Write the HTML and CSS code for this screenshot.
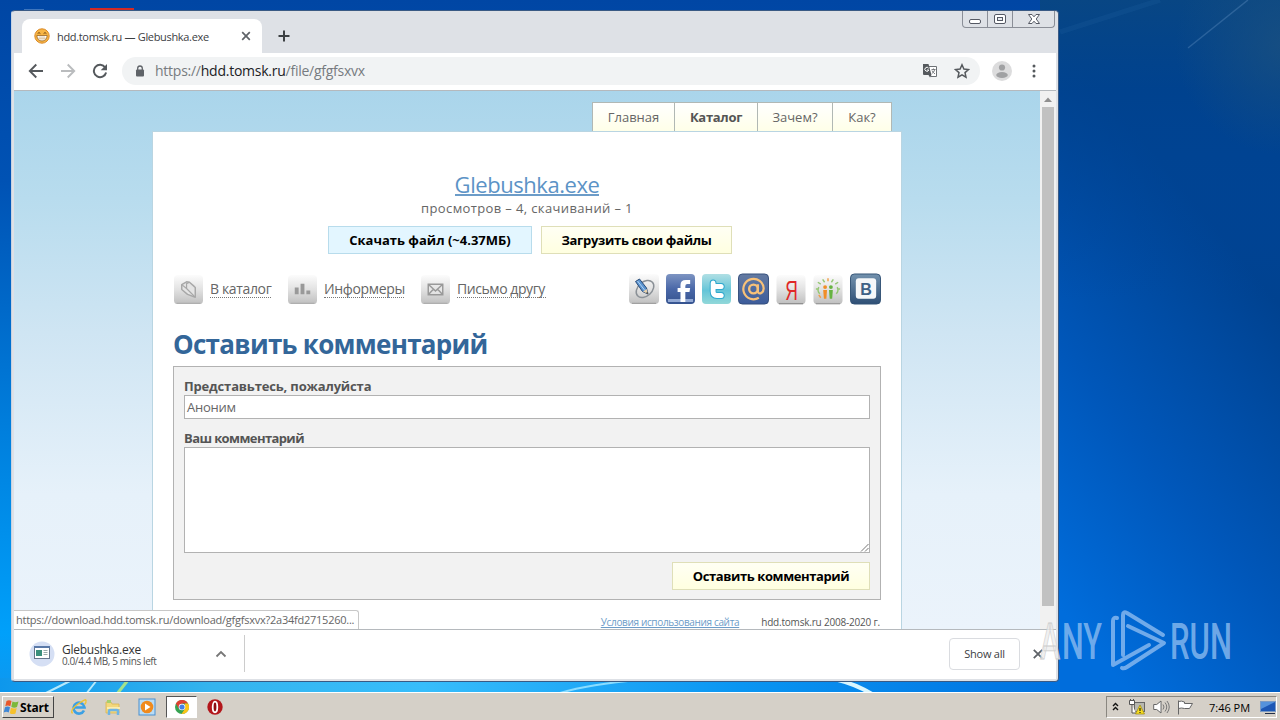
FILE: index.html
```html
<!DOCTYPE html>
<html lang="ru">
<head>
    <meta charset="UTF-8">
    <title>hdd.tomsk.ru — Glebushka.exe</title>
    <link rel="stylesheet" href="styles.css">
</head>
<body>
<div class="desktop">
    <svg class="wallpaper" width="1280" height="720" viewBox="0 0 1280 720">
        <defs>
            <linearGradient id="sky" x1="0" y1="0" x2="0" y2="1">
                <stop offset="0" stop-color="#0046a4"/>
                <stop offset=".25" stop-color="#0052b4"/>
                <stop offset=".6" stop-color="#007fdd"/>
                <stop offset=".88" stop-color="#00a0fa"/>
                <stop offset="1" stop-color="#1593ea"/>
            </linearGradient>
            <linearGradient id="right" gradientUnits="userSpaceOnUse" x1="1020" y1="560" x2="1300" y2="330">
                <stop offset="0" stop-color="#006ddc"/>
                <stop offset=".45" stop-color="#0057ba"/>
                <stop offset="1" stop-color="#004290"/>
            </linearGradient>
            <linearGradient id="topright" x1="0" y1="0" x2="0" y2="1">
                <stop offset="0" stop-color="#084684"/>
                <stop offset=".3" stop-color="#00428e" stop-opacity=".8"/>
                <stop offset="1" stop-color="#0048a0" stop-opacity="0"/>
            </linearGradient>
            <linearGradient id="bottom" x1="0" y1="0" x2="1" y2="0">
                <stop offset="0" stop-color="#0d97ec"/>
                <stop offset=".2" stop-color="#35b4ee"/>
                <stop offset=".4" stop-color="#37bdfb"/>
                <stop offset=".7" stop-color="#0a95f2"/>
                <stop offset="1" stop-color="#0071e0"/>
            </linearGradient>
            <radialGradient id="haze" gradientUnits="userSpaceOnUse" cx="1285" cy="45" r="110">
                <stop offset="0" stop-color="#1a5080" stop-opacity=".8"/>
                <stop offset="1" stop-color="#1a5080" stop-opacity="0"/>
            </radialGradient>
        </defs>
        <rect width="1280" height="720" fill="url(#sky)"/>
        <rect x="1040" width="240" height="720" fill="url(#right)"/>
        <rect x="1040" width="240" height="300" fill="url(#topright)"/>
        <rect x="1130" width="150" height="170" fill="url(#haze)"/>
        <rect y="678" width="1060" height="16" fill="url(#bottom)"/>
        <path d="M1188 48L1248 0" stroke="#5c8dbd" stroke-opacity=".4" stroke-width="1.5"/>
        <path d="M1060 32L1160 0" stroke="#2c70b0" stroke-opacity=".15" stroke-width="5"/>
        <path d="M44 694L72 680M86 694L97 680" stroke="#b5e8fb" stroke-width="2"/>
        <path d="M117 694L128 680" stroke="#a4e28c" stroke-width="3"/>
        <path d="M560 693Q590 684 640 680" stroke="#8adcff" stroke-width="2" fill="none"/>
        <path d="M838 680Q855 684 872 694" stroke="#d8f6ff" stroke-width="4" fill="none"/>
        <path d="M24 10h20" stroke="#7fa6d4" stroke-width="1"/>
        <rect x="90" y="8" width="44" height="4" fill="#d42a25"/>
    </svg>

    <div class="window">
        <div class="tabstrip">
            <div class="tab">
                <svg class="favicon" width="16" height="16" viewBox="0 0 16 16">
                    <circle cx="8" cy="8" r="7.2" fill="#f8b544" stroke="#d98a28"/>
                    <path d="M2.800 7.500h10.400q-.6 5.500-5.200 5.500t-5.200-5.500z" fill="#fff" stroke="#9a6420" stroke-width=".8"/>
                    <path d="M3.500 10.200h9M6 8v4.400M8 8v5M10 8v4.400" stroke="#c09a62" stroke-width=".5"/>
                    <path d="M3.600 5.600q1.400-2 2.800 0M9.600 5.600q1.400-2 2.800 0" stroke="#714716" stroke-width="1" fill="none"/>
                </svg>
                <span class="tab-title">hdd.tomsk.ru — Glebushka.exe</span>
                <svg class="tab-close" width="10" height="10" viewBox="0 0 10 10"><path d="M1.2 1.2l7.600 7.600M8.800 1.200L1.200 8.800" stroke="#5f6368" stroke-width="1.700"/></svg>
            </div>
            <svg class="new-tab" width="12" height="12" viewBox="0 0 12 12"><path d="M6 .5v11M.5 6h11" stroke="#3c4043" stroke-width="2"/></svg>
            <div class="caption-buttons">
                <div class="cap"><svg width="14" height="14" viewBox="0 0 14 14"><rect x="1.500" y="8.500" width="11" height="4" rx="1.500" fill="#fff" stroke="#555964"/></svg></div>
                <div class="cap"><svg width="14" height="14" viewBox="0 0 14 14"><rect x="1.500" y="3.500" width="11" height="9" rx="1.500" fill="#fff" stroke="#555964"/><rect x="4.500" y="6.500" width="5" height="3" fill="#e9ebef" stroke="#555964"/></svg></div>
                <div class="cap cap-close"><svg width="14" height="14" viewBox="0 0 14 14"><path d="M1.500 3.500h3.500L7 5.800l2-2.300h3.500L9.200 8l3.300 4.500H9L7 10.200l-2 2.300H1.500L4.800 8z" fill="#fff" stroke="#555964"/></svg></div>
            </div>
        </div>

        <div class="toolbar">
            <svg width="16" height="16" viewBox="0 0 16 16"><path d="M15 8H2M8.300 1.500L1.800 8l6.500 6.500" fill="none" stroke="#55595d" stroke-width="1.900"/></svg>
            <svg width="16" height="16" viewBox="0 0 16 16"><path d="M1 8h13M7.700 1.500L14.200 8l-6.500 6.500" fill="none" stroke="#babcbe" stroke-width="1.900"/></svg>
            <svg width="16" height="16" viewBox="0 0 16 16"><path d="M13.200 4.500A6.200 6.200 0 1 0 14.100 9.500" fill="none" stroke="#55595d" stroke-width="2"/><path d="M15 1v6.300H8.700z" fill="#55595d"/></svg>
            <div class="omnibox">
                <svg class="lock" width="10" height="12" viewBox="0 0 10 12"><rect x="1" y="4.500" width="8" height="7" rx="1" fill="#5f6368"/><path d="M2.700 5V3.300a2.300 2.300 0 0 1 4.600 0V5" fill="none" stroke="#5f6368" stroke-width="1.300"/></svg>
                <span class="url">https://<b>hdd.tomsk.ru</b>/file/gfgfsxvx</span>
                <svg class="translate" width="16" height="16" viewBox="0 0 16 16">
                    <path d="M7 3.500h7.500v10H8.500" fill="#fff" stroke="#6d7175"/>
                    <path d="M1 1h5.500l3 11H2a1 1 0 0 1-1-1zM6.500 12h3l-1.500 2.500z" fill="#55595d"/>
                    <path d="M6.600 5.200A2 2 0 1 0 6.800 7H5" fill="none" stroke="#fff"/>
                    <path d="M9.500 6.500h4M11.500 5.500v1M12.800 6.500q-.8 3-3 4M10 7.500q1 2 3 3.500" fill="none" stroke="#6d7175" stroke-width=".9"/>
                </svg>
                <svg width="16" height="16" viewBox="0 0 16 16"><path d="M8 1.800l1.900 4.300 4.600.4-3.500 3.100 1 4.600L8 11.800l-4 2.400 1-4.600L1.500 6.500l4.600-.4z" fill="none" stroke="#55595d" stroke-width="1.500"/></svg>
            </div>
            <svg class="avatar" width="20" height="20" viewBox="0 0 20 20"><circle cx="10" cy="10" r="10" fill="#dcdcdd"/><circle cx="10" cy="6.500" r="3.100" fill="#a0a1a3"/><ellipse cx="10" cy="14" rx="5.800" ry="3" fill="#a0a1a3"/></svg>
            <svg class="kebab" width="4" height="14" viewBox="0 0 4 14"><circle cx="2" cy="2" r="1.500" fill="#55595d"/><circle cx="2" cy="7" r="1.500" fill="#55595d"/><circle cx="2" cy="12" r="1.500" fill="#55595d"/></svg>
        </div>

        <div class="viewport">
            <div class="page">
                <div class="nav">
                    <a class="nav-item nav-main"><span>Главная</span></a>
                    <a class="nav-item nav-catalog"><span>Каталог</span></a>
                    <a class="nav-item nav-why"><span>Зачем?</span></a>
                    <a class="nav-item nav-how"><span>Как?</span></a>
                </div>
                <div class="content">
                    <div class="file-title"><a>Glebushka.exe</a></div>
                    <div class="file-meta"><span>просмотров – 4, скачиваний – 1</span></div>
                    <div class="file-actions">
                        <div class="btn btn-blue"><span>Скачать файл (~4.37МБ)</span></div>
                        <div class="btn btn-upload"><span>Загрузить свои файлы</span></div>
                    </div>

                    <div class="links">
                        <svg width="29" height="29" viewBox="0 0 30 30">
                            <defs><linearGradient id="grey" x1="0" y1="0" x2="0" y2="1"><stop offset="0" stop-color="#fcfcfc"/><stop offset=".5" stop-color="#e2e2e2"/><stop offset="1" stop-color="#bfbfbf"/></linearGradient></defs>
                            <rect width="30" height="30" rx="4" fill="url(#grey)"/><path d="M3 29.300h24" stroke="#aaa"/>
                            <path d="M8 10l5-3 3 .5 4 3.500 2 2v10l-8-3-6-5z" fill="#e4e4e4" stroke="#a8a8a8" stroke-width="1.500" stroke-linejoin="round"/><path d="M8 10l5 4 8 8M13 14V9l3-1.500" fill="none" stroke="#a8a8a8" stroke-width="1.200"/>
                        </svg>
                        <a class="link-catalog">В каталог</a>
                        <svg width="29" height="29" viewBox="0 0 30 30">
                            <rect width="30" height="30" rx="4" fill="url(#grey)"/><path d="M3 29.300h24" stroke="#aaa"/>
                            <path d="M7 13h4v7H7zM13 9h4v11h-4zM19 16h4v4h-4z" fill="#999"/>
                        </svg>
                        <a class="link-informers">Информеры</a>
                        <svg width="29" height="29" viewBox="0 0 30 30">
                            <rect width="30" height="30" rx="4" fill="url(#grey)"/><path d="M3 29.300h24" stroke="#aaa"/>
                            <path d="M7.500 9.500h15v11h-15zM7.500 9.500l7.500 7 7.500-7M7.500 20.500l5.500-6M22.500 20.500l-5.500-6" fill="#ededed" fill-opacity=".5" stroke="#999" stroke-width="1.500"/>
                        </svg>
                        <a class="link-mail">Письмо другу</a>

                        <div class="social">
                            <svg width="30" height="30" viewBox="0 0 30 30">
                                <rect width="30" height="30" rx="4" fill="url(#grey)"/><path d="M3 29.300h24" stroke="#999"/>
                                <ellipse cx="16" cy="15" rx="10" ry="7" transform="rotate(-42 16 15)" fill="none" stroke="#8b9197" stroke-width="1.500"/>
                                <path d="M6.500 7.500l4-2.500 7 9 1.500 6-5.500-2.500z" fill="#5a93d0" stroke="#2b4c78"/><path d="M8.500 7l7 9" stroke="#b4d6f5"/><path d="M14 17.500l5 2.500-1.300-5z" fill="#e8d2ae"/><path d="M17 19l2 1-.5-2z" fill="#222"/>
                            </svg>
                            <svg width="29" height="30" viewBox="0 0 30 30" preserveAspectRatio="none">
                                <defs><linearGradient id="fb" x1="0" y1="0" x2="0" y2="1"><stop offset="0" stop-color="#7d94c2"/><stop offset=".5" stop-color="#4a68a8"/><stop offset="1" stop-color="#35538f"/></linearGradient></defs>
                                <rect width="30" height="30" rx="4" fill="url(#fb)"/><rect x="2" y="25" width="26" height="3" fill="#91a8d4"/>
                                <path d="M15 28V18h-3v-4h3v-3q0-5 5.500-5H25v4h-3q-2 0-2 2v2h5l-.7 4H20v10z" fill="#fff"/>
                            </svg>
                            <svg width="29" height="30" viewBox="0 0 30 30" preserveAspectRatio="none">
                                <defs><linearGradient id="tw" x1="0" y1="0" x2="0" y2="1"><stop offset="0" stop-color="#b0dfe4"/><stop offset=".55" stop-color="#65c5d8"/><stop offset="1" stop-color="#91d8d9"/></linearGradient></defs>
                                <rect width="30" height="30" rx="4" fill="url(#tw)"/>
                                <path d="M11.500 9v8.500q0 4 4 4h4.500M11.500 12.500h8.500" fill="none" stroke="#2fa8ce" stroke-width="7" stroke-linecap="round"/>
                                <path d="M11.500 9v8.500q0 4 4 4h4.500M11.500 12.500h8.500" fill="none" stroke="#fff" stroke-width="5" stroke-linecap="round"/>
                            </svg>
                            <svg width="31" height="32" viewBox="0 0 32 32">
                                <defs><linearGradient id="mail" x1="0" y1="0" x2="0" y2="1"><stop offset="0" stop-color="#647aa1"/><stop offset="1" stop-color="#3c5c9b"/></linearGradient></defs>
                                <rect x=".5" y=".5" width="31" height="31" rx="4" fill="url(#mail)" stroke="#354e7c"/>
                                <circle cx="16" cy="16" r="4.500" fill="none" stroke="#f8c178" stroke-width="2.500"/>
                                <path d="M20.500 11v7q0 3 3 2.500 3-1.500 3-5A10.500 10.500 0 1 0 21.500 25" fill="none" stroke="#f8c178" stroke-width="2.300"/>
                            </svg>
                            <svg width="30" height="31" viewBox="0 0 31 31">
                                <rect x=".5" y=".5" width="30" height="30" rx="4" fill="url(#grey)"/><path d="M3 30.300h25" stroke="#777"/>
                                <text class="ya" x="9.500" y="26" textLength="13" lengthAdjust="spacingAndGlyphs">Я</text>
                            </svg>
                            <svg width="30" height="31" viewBox="0 0 31 31">
                                <rect x=".5" y=".5" width="30" height="30" rx="4" fill="url(#grey)"/><path d="M3 30.300h25" stroke="#888"/>
                                <path d="M7 20q-3-3-1-7M8 10l-3-2M12 8l-2-3M19 8l2-3M23 10l3-2M24 20q3-3 1-7M3 15h3M25 15h3" fill="none" stroke="#96c774" stroke-width="1.500"/>
                                <path d="M15.500 7V4M8 24l-2-3" stroke="#f1a04a" stroke-width="1.500"/>
                                <circle cx="12.500" cy="13" r="2" fill="#f18e28"/><path d="M10.500 16h4l-.7 9h-2.500z" fill="#f18e28"/>
                                <circle cx="18.500" cy="13" r="2" fill="#67b341"/><path d="M16.500 16h4l-.7 9h-2.500z" fill="#67b341"/>
                            </svg>
                            <svg width="31" height="32" viewBox="0 0 32 32">
                                <defs><linearGradient id="vk" x1="0" y1="0" x2="0" y2="1"><stop offset="0" stop-color="#7392ae"/><stop offset="1" stop-color="#2e4f75"/></linearGradient></defs>
                                <rect x=".5" y=".5" width="31" height="31" rx="4" fill="url(#vk)" stroke="#345476"/>
                                <rect x="6" y="5" width="21" height="21" rx="3" fill="#f5f7f9"/>
                                <text class="vk" x="10.500" y="22" textLength="12" lengthAdjust="spacingAndGlyphs">В</text>
                            </svg>
                        </div>
                    </div>

                    <h1><span>Оставить комментарий</span></h1>
                    <div class="form">
                        <label class="label-name">Представьтесь, пожалуйста</label>
                        <div class="input"><span>Аноним</span></div>
                        <label class="label-comment">Ваш комментарий</label>
                        <div class="textarea">
                            <svg width="9" height="9" viewBox="0 0 9 9"><path d="M1 8.500L8.500 1M5 8.500L8.500 5" stroke="#777"/></svg>
                        </div>
                        <div class="btn btn-submit"><span>Оставить комментарий</span></div>
                    </div>
                    <div class="footer">
                        <a>Условия использования сайта</a>
                        <span>hdd.tomsk.ru 2008-2020 г.</span>
                    </div>
                </div>
            </div>
            <div class="scrollbar">
                <svg width="16" height="16" viewBox="0 0 16 16"><path d="M4 11l4-4.500 4 4.500z" fill="#8f8f8f"/></svg>
                <div class="thumb"></div>
            </div>
            <div class="status"><span>https://download.hdd.tomsk.ru/download/gfgfsxvx?2a34fd2715260...</span></div>
        </div>

        <div class="downloads">
            <div class="download-item">
                <svg width="26" height="26" viewBox="0 0 26 26">
                    <circle cx="13" cy="13" r="12.500" fill="#d5dff4"/>
                    <rect x="5.500" y="5.500" width="15" height="12" fill="#fff" stroke="#66758c"/>
                    <path d="M5 6h16" stroke="#5a79a8" stroke-width="2"/>
                    <rect x="7" y="9" width="6" height="6" fill="#3b8f7c"/><path d="M14.500 9.500h4M14.500 11.500h4M14.500 13.500h4" stroke="#9aabaa"/>
                </svg>
                <div class="download-text">
                    <div class="download-name"><span>Glebushka.exe</span></div>
                    <div class="download-progress"><span>0.0/4.4 MB, 5 mins left</span></div>
                </div>
                <svg class="chevron" width="12" height="8" viewBox="0 0 12 8"><path d="M1.500 6.500L6 2l4.500 4.500" fill="none" stroke="#777" stroke-width="1.800"/></svg>
            </div>
            <div class="show-all"><span>Show all</span></div>
            <svg class="bar-close" width="10" height="10" viewBox="0 0 10 10"><path d="M.8.8l8.400 8.400M9.200.8L.8 9.200" stroke="#5f6368" stroke-width="1.800"/></svg>
        </div>
    </div>

    <svg class="watermark" width="220" height="70" viewBox="0 0 220 70">
        <g class="mark-text">
            <text class="mark-a" x="6" y="54" textLength="20" lengthAdjust="spacingAndGlyphs">A</text>
            <text x="28" y="54" textLength="40" lengthAdjust="spacingAndGlyphs">NY</text>
            <text x="136" y="54" textLength="62" lengthAdjust="spacingAndGlyphs">RUN</text>
        </g>
        <path class="mark-logo" d="M83 13q-4-1-4 3v44l36-20M89 50V10q0-4 4-2l36 22M94 21l36 17-37 24q-3 2-5 1"/>
    </svg>

    <div class="taskbar">
        <div class="start">
            <svg width="17" height="16" viewBox="0 0 16 16">
                <path d="M3 2q2.500-1.500 5 0L6.800 7.200q-2.500-1.300-5 0z" fill="#e8572b"/>
                <path d="M9 2.500q2.500 1.500 6 0L13.500 8q-3 1.500-5.700-.3z" fill="#7cb83c"/>
                <path d="M1.500 8.200q2.500-1.300 5 0L5.200 13.500q-2.500-1.300-5 0z" fill="#3f87d6"/>
                <path d="M7.500 8.700q2.500 1.500 5.700.3L12 14.500q-3 1.300-5.700-.3z" fill="#f6c12c"/>
            </svg>
            <span>Start</span>
        </div>
        <div class="quick">
            <svg width="18" height="18" viewBox="0 0 18 18"><path d="M14 12.500A5.500 5.500 0 1 1 14.500 9.500H5" fill="none" stroke="#3ba0e4" stroke-width="2.600"/><path d="M2.500 15.500Q-.5 12 8 6t8-3.500q.5 2-1.500 4" fill="none" stroke="#f0c22e" stroke-width="1.300"/></svg>
        </div>
        <div class="quick">
            <svg width="18" height="18" viewBox="0 0 18 18"><path d="M2 4h5l1 2h7v9H2z" fill="#f3d77c" stroke="#d9b552" stroke-width=".8"/><path d="M3 2h4v3H3z" fill="#a7cf6e"/><path d="M3 9h13v2H3z" fill="#fbedb0"/><path d="M5 17v-4q0-1 1-1h7q1 0 1 1v4" fill="none" stroke="#6fb5e4" stroke-width="2.500"/></svg>
        </div>
        <div class="quick">
            <svg width="18" height="18" viewBox="0 0 18 18"><rect x="1" y="1" width="16" height="16" fill="#b9dcf5" stroke="#4a90d0"/><circle cx="9" cy="9" r="6.300" fill="#f08a1d"/><path d="M7 5.500l5.500 3.500L7 12.500z" fill="#fff"/></svg>
        </div>
        <div class="quick quick-active">
            <svg width="14" height="14" viewBox="0 0 14 14"><circle cx="7" cy="7" r="7" fill="#36a352"/><path d="M.9 3.500A7 7 0 0 1 13.100 3.500H7L4 8.700z" fill="#df4032"/><path d="M13.100 3.500A7 7 0 0 1 6.500 14L10 8.700V3.500z" fill="#fbc417"/><circle cx="7" cy="7" r="3.300" fill="#fff"/><circle cx="7" cy="7" r="2.600" fill="#447fe4"/></svg>
        </div>
        <div class="quick">
            <svg width="16" height="16" viewBox="0 0 16 16"><circle cx="8" cy="8" r="7.700" fill="#b3161b"/><ellipse cx="8" cy="8" rx="2.300" ry="5.300" fill="#8e0d12" stroke="#fff" stroke-width="1.800"/></svg>
        </div>
        <div class="tray">
            <svg class="tray-up" width="8" height="10" viewBox="0 0 8 10"><path d="M1 4L3.500 1.500 6 4M1 8L3.500 5.500 6 8" fill="none" stroke="#111" stroke-width="1.400"/></svg>
            <svg class="tray-net" width="16" height="16" viewBox="0 0 16 16"><rect x="5.500" y="3.500" width="10" height="9" fill="#b8b8b0" stroke="#666"/><path d="M.5 1.500h5v4h-5zM3 5.500v8.500h4M1.500 0v2M4.500 0v2" fill="#fff" stroke="#555"/><path d="M11 6l4.500 9h-9z" fill="#f6dc21" stroke="#9a8510" stroke-width=".7"/><path d="M11 9v3M11 13v1" stroke="#222" stroke-width="1.200"/></svg>
            <svg class="tray-sound" width="17" height="14" viewBox="0 0 17 14"><path d="M.7 4.500h3L8 1v12L3.700 9.500h-3z" fill="#fff" stroke="#666"/><path d="M10 4.500q2 2.500 0 5M12 2.500q3.500 4.500 0 9M14 1q4.500 6 0 12" fill="none" stroke="#777"/></svg>
            <svg class="tray-flag" width="17" height="15" viewBox="0 0 17 15"><path d="M1.500 14.500V.5M1.500 1.500q3-1 6 .5v1.500h8l-3 5h-5q-3-1-6 0" fill="#fff" stroke="#666"/></svg>
            <span class="clock">7:46 PM</span>
            <svg width="16" height="13" viewBox="0 0 16 13"><rect x=".5" y=".5" width="15" height="10" fill="#1d57b5" stroke="#7c9bc4"/><path d="M1 1h14L1 8z" fill="#5592dc"/><path d="M5 12.500h10" stroke="#222f48"/></svg>
        </div>
    </div>
</div>
</body>
</html>
```
FILE: styles.css
```css
* {
    box-sizing: border-box;
}

body {
    margin: 0;
    font-family: "Open Sans", "Noto Sans", sans-serif;
    color: #555;
}

svg {
    display: block;
    flex: none;
}

span, a, label {
    white-space: nowrap;
}

.desktop {
    position: relative;
    width: 1280px;
    height: 720px;
    overflow: hidden;
    background: #0052b4;
}

.wallpaper {
    position: absolute;
    top: 0;
    left: 0;
}

/* browser window */
.window {
    position: absolute;
    left: 11px;
    top: 10px;
    width: 1048px;
    height: 672px;
    border: 1px solid #3a5a84;
    border-left-color: #c4d2e4;
    border-radius: 4px;
    padding: 0 2px;
    background: #dee1e6;
    display: flex;
    flex-direction: column;
    overflow: hidden;
}

.tabstrip {
    height: 42px;
    flex: none;
    display: flex;
    align-items: flex-start;
}

.tab {
    width: 240px;
    height: 34px;
    margin: 8px 0 0 8px;
    padding: 0 11px 0 12px;
    border-radius: 8px 8px 0 0;
    background: #fff;
    display: flex;
    align-items: center;
}

.tab-title {
    margin-left: 7px;
    flex: 1;
    font-size: 11px;
    color: #3c4043;
    letter-spacing: -0.33px;
}

.new-tab {
    margin: 19px 0 0 16px;
}

.caption-buttons {
    margin: 0 1px 0 auto;
    height: 17px;
    display: flex;
    border: 1px solid #8a8e97;
    border-top: none;
    border-radius: 0 0 4px 4px;
}

.cap {
    width: 25px;
    display: flex;
    justify-content: center;
    border-right: 1px solid #8a8e97;
}

.cap-close {
    width: 41px;
    border-right: none;
}

.toolbar {
    height: 38px;
    flex: none;
    padding: 0 20px 2px 14px;
    background: #fff;
    border-bottom: 1px solid #b5b9bd;
    display: flex;
    align-items: center;
    gap: 16px;
}

.omnibox {
    flex: 1;
    height: 28px;
    margin-left: -2px;
    padding: 0 10px 0 13px;
    border-radius: 14px;
    background: #f1f3f4;
    display: flex;
    align-items: center;
}

.url {
    flex: 1;
    margin-left: 10px;
    font-size: 14px;
    letter-spacing: -0.25px;
    color: #777b80;
}

.url b {
    font-weight: 400;
    color: #202124;
}

.translate {
    margin-right: 16px;
}

.avatar {
    margin: 0 4px 0 -4px;
}

.viewport {
    position: relative;
    flex: none;
    height: 538px;
    display: flex;
    overflow: hidden;
}

.page {
    flex: 1;
    display: flex;
    flex-direction: column;
    align-items: center;
    background: linear-gradient(#aad5eb 0%, #b8dcee 20%, #cfe5f3 45%, #e6f1fa 75%, #ebf3fb 100%);
    overflow: hidden;
}

.nav {
    width: 750px;
    height: 40px;
    flex: none;
    padding: 11px 10px 0 0;
    display: flex;
    justify-content: flex-end;
}

.nav-item {
    border: 1px solid #b1b8b4;
    border-right: none;
    border-bottom: none;
    background: linear-gradient(#fff, #ffffe8);
    display: flex;
    align-items: center;
    justify-content: center;
    font-size: 13px;
    color: #666;
}

.nav-main {
    width: 82px;
}

.nav-catalog {
    width: 83px;
    font-weight: 700;
    letter-spacing: -0.3px;
    color: #555;
}

.nav-why {
    width: 75px;
}

.nav-how {
    width: 60px;
    border-right: 1px solid #b1b8b4;
}

.content {
    width: 750px;
    height: 600px;
    flex: none;
    border: 1px solid #b9d5e2;
    padding: 38px 20px 0;
    background: #fff;
}

.file-title {
    height: 29px;
    text-align: center;
    font-size: 22px;
    line-height: 28px;
    letter-spacing: -0.45px;
    color: #5c93c6;
}

.file-title a {
    display: inline-block;
    height: 26px;
    line-height: 28px;
    border-bottom: 2px solid #6c9cc8;
}

.file-meta {
    height: 18px;
    text-align: center;
    font-size: 13px;
    line-height: 18px;
    letter-spacing: 0.37px;
    color: #666;
}

.file-actions {
    display: flex;
    gap: 9px;
    margin: 9px 0 0 155px;
}

.btn {
    height: 28px;
    border: 1px solid #dfdfb8;
    background: linear-gradient(#fffff4, #ffffe0);
    display: flex;
    align-items: center;
    justify-content: center;
    font-size: 13px;
    font-weight: 700;
    color: #000;
}

.btn-blue {
    width: 204px;
    border-color: #b8dcec;
    background: #e3f6ff;
}

.btn-upload {
    width: 191px;
    letter-spacing: -0.3px;
}

.links {
    display: flex;
    align-items: center;
    height: 32px;
    margin-top: 19px;
    padding-left: 1px;
    font-size: 14px;
    color: #666;
}

.links a {
    height: 17px;
    line-height: 16px;
    margin: 1px 17px 0 7px;
    border-bottom: 1px dotted #777;
}

.link-catalog {
    width: 61px;
    letter-spacing: -0.35px;
}

.link-informers {
    width: 80px;
    letter-spacing: -0.35px;
}

.link-mail {
    width: 89px;
    letter-spacing: -0.43px;
}

.social {
    margin-left: auto;
    display: flex;
    align-items: center;
    gap: 7px;
}

.ya {
    font: 28px "Liberation Sans", sans-serif;
    fill: #e02828;
}

.vk {
    font: 700 17px "Liberation Sans", sans-serif;
    fill: #3f6186;
}

h1 {
    height: 36px;
    margin: 21px 0 0;
    font-size: 26px;
    line-height: 36px;
    font-weight: 700;
    letter-spacing: -0.72px;
    color: #336699;
}

.form {
    height: 234px;
    margin-top: 4px;
    padding: 10px 10px 0;
    border: 1px solid #b2b2b2;
    background: #f2f2f2;
    display: flex;
    flex-direction: column;
    align-items: flex-start;
}

.form label {
    height: 18px;
    font-size: 13px;
    line-height: 18px;
    font-weight: 700;
    color: #555;
}

.label-name {
    letter-spacing: -0.16px;
}

.label-comment {
    letter-spacing: -0.6px;
}

.input {
    width: 686px;
    height: 24px;
    margin-bottom: 10px;
    border: 1px solid #b2b2b2;
    background: #fff;
    padding-left: 2px;
    font-size: 13px;
    line-height: 22px;
    letter-spacing: -0.25px;
    color: #666;
}

.textarea {
    width: 686px;
    height: 106px;
    border: 1px solid #b2b2b2;
    background: #fff;
    display: flex;
    align-items: flex-end;
    justify-content: flex-end;
}

.btn-submit {
    width: 198px;
    margin: 9px 0 0 auto;
    letter-spacing: -0.4px;
}

.footer {
    display: flex;
    justify-content: flex-end;
    gap: 22px;
    margin-top: 15px;
    padding-right: 1px;
    font-size: 10px;
    line-height: 14px;
    letter-spacing: -0.2px;
}

.footer a {
    color: #6c9cc8;
    letter-spacing: -0.35px;
    text-decoration: underline;
}

.scrollbar {
    width: 16px;
    background: #f1f1f1;
}

.thumb {
    width: 12px;
    height: 499px;
    margin-left: 2px;
    background: #c1c1c1;
}

.status {
    position: absolute;
    left: -1px;
    bottom: 0;
    width: 346px;
    height: 19px;
    padding-left: 2px;
    border: 1px solid #c8c8c8;
    border-bottom: none;
    border-radius: 0 3px 0 0;
    background: #fff;
    font-size: 11px;
    line-height: 18px;
    letter-spacing: -0.24px;
    color: #666;
}

/* download shelf */
.downloads {
    height: 50px;
    flex: none;
    border-top: 1px solid #b5b9bd;
    background: #fff;
    display: flex;
    align-items: center;
    padding: 0 13px 2px 15px;
}

.download-item {
    width: 216px;
    height: 37px;
    border-right: 1px solid #ccc;
    display: flex;
    align-items: center;
}

.download-text {
    margin: 1px auto 0 7px;
}

.download-name {
    height: 13px;
    font-size: 12px;
    line-height: 14px;
    letter-spacing: -0.25px;
    color: #333;
}

.download-progress {
    height: 10px;
    font-size: 10px;
    line-height: 10px;
    letter-spacing: -0.4px;
}

.chevron {
    margin-right: 17px;
}

.show-all {
    width: 71px;
    height: 32px;
    margin-left: auto;
    border: 1px solid #dadce0;
    border-radius: 4px;
    display: flex;
    align-items: center;
    justify-content: center;
    font-size: 11px;
    letter-spacing: -0.25px;
    color: #3c4043;
}

.bar-close {
    margin-left: 13px;
}

.watermark {
    position: absolute;
    left: 1034px;
    top: 605px;
}

.mark-text {
    font: 500 50px Roboto, sans-serif;
    fill: #8cbcf0;
    fill-opacity: 0.8;
}

.mark-a {
    fill: #ececec;
    stroke: #ccc;
    stroke-width: 0.8px;
}

.mark-logo {
    fill: none;
    stroke: #8cbcf0;
    stroke-opacity: 0.8;
    stroke-width: 4px;
    stroke-linecap: round;
    stroke-linejoin: round;
}

.taskbar {
    position: absolute;
    left: 0;
    bottom: 0;
    width: 1280px;
    height: 28px;
    padding: 3px 3px 0 2px;
    background: #d5d0c8;
    border-top: 1px solid #fff;
    display: flex;
}

.start {
    width: 52px;
    height: 22px;
    margin-right: 8px;
    border: 1px solid #fff;
    border-right-color: #444;
    border-bottom-color: #444;
    display: flex;
    align-items: center;
    font-size: 12px;
    font-weight: 700;
    letter-spacing: -0.2px;
    color: #000;
}

.quick {
    width: 34px;
    height: 22px;
    display: flex;
    align-items: center;
    justify-content: center;
}

.quick-active {
    width: 31px;
    margin: 0 1px 0 2px;
    border: 1px solid #555;
    border-right-color: #fff;
    border-bottom-color: #fff;
    background: #fff;
}

.tray {
    width: 171px;
    height: 22px;
    margin-left: auto;
    padding-left: 5px;
    border: 1px solid #8a8780;
    border-right-color: #fff;
    border-bottom-color: #fff;
    display: flex;
    align-items: center;
}

.tray-net {
    margin-left: 9px;
}

.tray-sound {
    margin-left: 8px;
}

.tray-flag {
    margin-left: 7px;
}

.clock {
    width: 40px;
    margin: 0 11px 0 15px;
    font-size: 11px;
    color: #000;
}
```
